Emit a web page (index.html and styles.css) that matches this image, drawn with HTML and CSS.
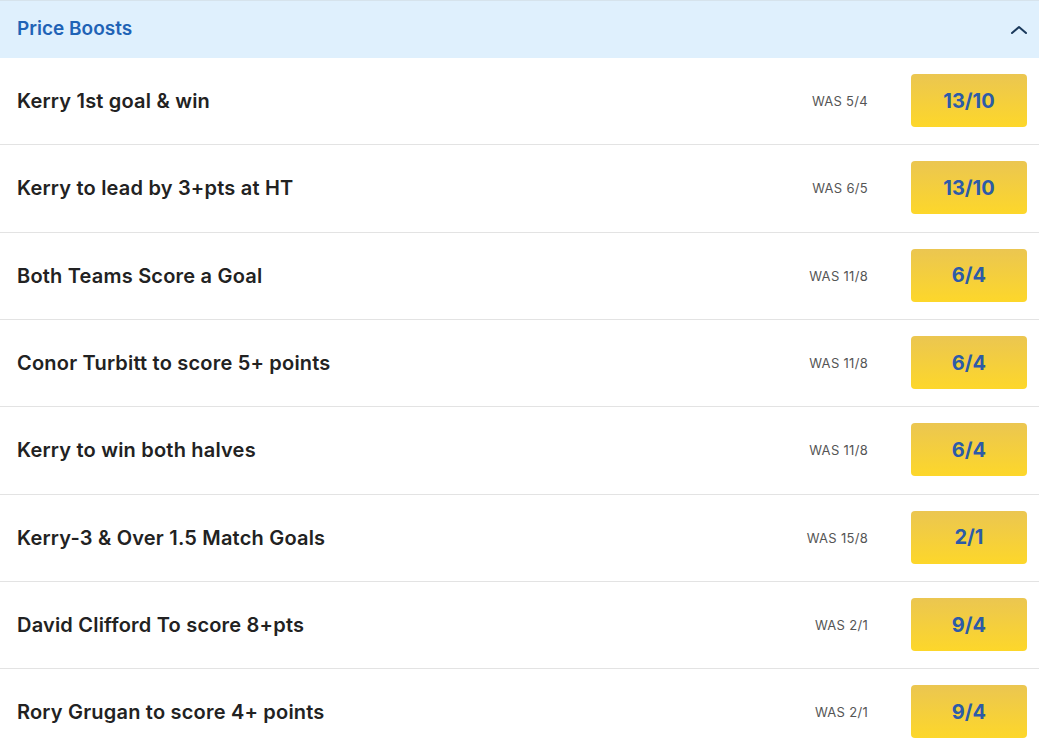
FILE: index.html
```html
<!DOCTYPE html>
<html>
<head>
<meta charset="utf-8">
<link rel="stylesheet" href="styles.css">
</head>
<body>
<div class="panel">
  <div class="header">
    <span class="title">Price Boosts</span>
    <svg class="chev" width="18" height="10" viewBox="0 0 18 10"><path d="M2 8 L9 2 L16 8" fill="none" stroke="#1b3a5c" stroke-width="2" stroke-linecap="round" stroke-linejoin="round"/></svg>
  </div>
  <div class="row"><span class="name">Kerry 1st goal &amp; win</span><span class="was">WAS 5/4</span><span class="odds">13/10</span></div>
  <div class="row"><span class="name">Kerry to lead by 3+pts at HT</span><span class="was">WAS 6/5</span><span class="odds">13/10</span></div>
  <div class="row"><span class="name">Both Teams Score a Goal</span><span class="was">WAS 11/8</span><span class="odds">6/4</span></div>
  <div class="row"><span class="name">Conor Turbitt to score 5+ points</span><span class="was">WAS 11/8</span><span class="odds">6/4</span></div>
  <div class="row"><span class="name">Kerry to win both halves</span><span class="was">WAS 11/8</span><span class="odds">6/4</span></div>
  <div class="row"><span class="name">Kerry-3 &amp; Over 1.5 Match Goals</span><span class="was">WAS 15/8</span><span class="odds">2/1</span></div>
  <div class="row"><span class="name">David Clifford To score 8+pts</span><span class="was">WAS 2/1</span><span class="odds">9/4</span></div>
  <div class="row"><span class="name">Rory Grugan to score 4+ points</span><span class="was">WAS 2/1</span><span class="odds">9/4</span></div>
</div>
</body>
</html>
```
FILE: styles.css
```css
* { box-sizing: border-box; }
html, body { margin: 0; padding: 0; background: #fff; }
body { font-family: Inter, "Noto Sans", sans-serif; overflow: hidden; }
.panel { width: 1039px; }
.header {
  height: 58px;
  background: #dff0fd;
  border-top: 1px solid #d6e3ec;
  display: flex;
  align-items: center;
  justify-content: space-between;
  padding: 0 11px 2px 17px;
}
.title { font-size: 19px; font-weight: 600; color: #1f63b6; }
.chev { display: block; margin-top: 2px; }
.row {
  height: 87.33px;
  display: flex;
  align-items: center;
  padding: 0 12px 0 17px;
  border-bottom: 1px solid #e3e3e3;
}
.name { flex: 1; font-size: 20px; font-weight: 600; color: #222; letter-spacing: 0.2px; }
.was { font-size: 13px; color: #555; letter-spacing: 0.3px; margin-right: 43px; }
.odds {
  width: 116px;
  height: 53px;
  border-radius: 4px;
  background: linear-gradient(#ebc651, #fdd72a);
  display: flex;
  align-items: center;
  justify-content: center;
  font-size: 20px;
  font-weight: 700;
  color: #2c5ba8;
  margin-top: -1px;
}
```
